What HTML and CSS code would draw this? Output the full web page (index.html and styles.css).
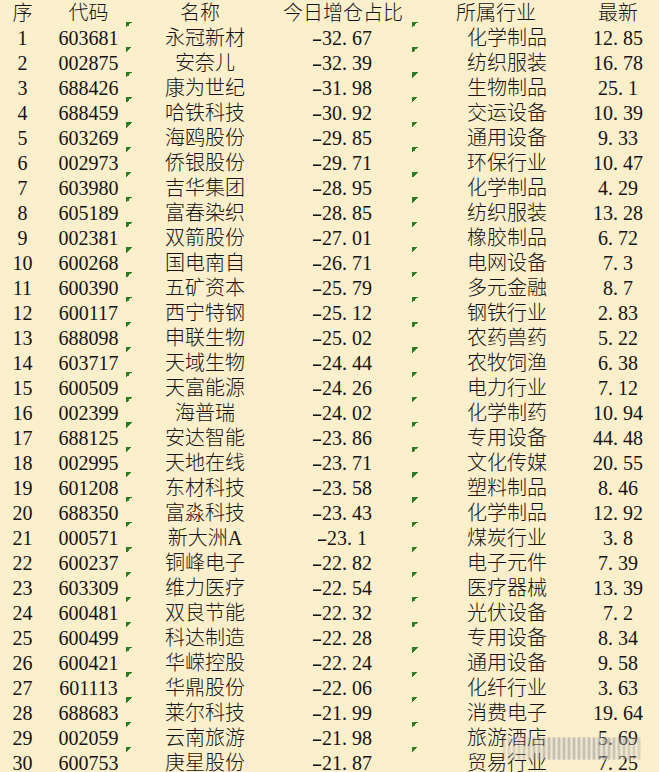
FILE: index.html
```html
<!DOCTYPE html>
<html lang="zh-CN">
<head>
<meta charset="utf-8">
<title>今日增仓占比</title>
<link rel="stylesheet" href="styles.css">
</head>
<body>
<div class="sheet">
  <div class="row head">
    <div class="c c0">序</div>
    <div class="c c1">代码</div>
    <div class="c c2">名称</div>
    <div class="c c3">今日增仓占比</div>
    <div class="c c4">所属行业</div>
    <div class="c c5">最新</div>
  </div>
  <div class="row"><div class="c c0">1</div><div class="c c1">603681</div><div class="c c2 t">永冠新材</div><div class="c c3"><span class="m">-</span>32<span class="d">.</span>67</div><div class="c c4 t">化学制品</div><div class="c c5">12<span class="d">.</span>85</div></div>
  <div class="row"><div class="c c0">2</div><div class="c c1">002875</div><div class="c c2 t">安奈儿</div><div class="c c3"><span class="m">-</span>32<span class="d">.</span>39</div><div class="c c4 t">纺织服装</div><div class="c c5">16<span class="d">.</span>78</div></div>
  <div class="row"><div class="c c0">3</div><div class="c c1">688426</div><div class="c c2 t">康为世纪</div><div class="c c3"><span class="m">-</span>31<span class="d">.</span>98</div><div class="c c4 t">生物制品</div><div class="c c5">25<span class="d">.</span>1</div></div>
  <div class="row"><div class="c c0">4</div><div class="c c1">688459</div><div class="c c2 t">哈铁科技</div><div class="c c3"><span class="m">-</span>30<span class="d">.</span>92</div><div class="c c4 t">交运设备</div><div class="c c5">10<span class="d">.</span>39</div></div>
  <div class="row"><div class="c c0">5</div><div class="c c1">603269</div><div class="c c2 t">海鸥股份</div><div class="c c3"><span class="m">-</span>29<span class="d">.</span>85</div><div class="c c4 t">通用设备</div><div class="c c5">9<span class="d">.</span>33</div></div>
  <div class="row"><div class="c c0">6</div><div class="c c1">002973</div><div class="c c2 t">侨银股份</div><div class="c c3"><span class="m">-</span>29<span class="d">.</span>71</div><div class="c c4 t">环保行业</div><div class="c c5">10<span class="d">.</span>47</div></div>
  <div class="row"><div class="c c0">7</div><div class="c c1">603980</div><div class="c c2 t">吉华集团</div><div class="c c3"><span class="m">-</span>28<span class="d">.</span>95</div><div class="c c4 t">化学制品</div><div class="c c5">4<span class="d">.</span>29</div></div>
  <div class="row"><div class="c c0">8</div><div class="c c1">605189</div><div class="c c2 t">富春染织</div><div class="c c3"><span class="m">-</span>28<span class="d">.</span>85</div><div class="c c4 t">纺织服装</div><div class="c c5">13<span class="d">.</span>28</div></div>
  <div class="row"><div class="c c0">9</div><div class="c c1">002381</div><div class="c c2 t">双箭股份</div><div class="c c3"><span class="m">-</span>27<span class="d">.</span>01</div><div class="c c4 t">橡胶制品</div><div class="c c5">6<span class="d">.</span>72</div></div>
  <div class="row"><div class="c c0">10</div><div class="c c1">600268</div><div class="c c2 t">国电南自</div><div class="c c3"><span class="m">-</span>26<span class="d">.</span>71</div><div class="c c4 t">电网设备</div><div class="c c5">7<span class="d">.</span>3</div></div>
  <div class="row"><div class="c c0">11</div><div class="c c1">600390</div><div class="c c2 t">五矿资本</div><div class="c c3"><span class="m">-</span>25<span class="d">.</span>79</div><div class="c c4 t">多元金融</div><div class="c c5">8<span class="d">.</span>7</div></div>
  <div class="row"><div class="c c0">12</div><div class="c c1">600117</div><div class="c c2 t">西宁特钢</div><div class="c c3"><span class="m">-</span>25<span class="d">.</span>12</div><div class="c c4 t">钢铁行业</div><div class="c c5">2<span class="d">.</span>83</div></div>
  <div class="row"><div class="c c0">13</div><div class="c c1">688098</div><div class="c c2 t">申联生物</div><div class="c c3"><span class="m">-</span>25<span class="d">.</span>02</div><div class="c c4 t">农药兽药</div><div class="c c5">5<span class="d">.</span>22</div></div>
  <div class="row"><div class="c c0">14</div><div class="c c1">603717</div><div class="c c2 t">天域生物</div><div class="c c3"><span class="m">-</span>24<span class="d">.</span>44</div><div class="c c4 t">农牧饲渔</div><div class="c c5">6<span class="d">.</span>38</div></div>
  <div class="row"><div class="c c0">15</div><div class="c c1">600509</div><div class="c c2 t">天富能源</div><div class="c c3"><span class="m">-</span>24<span class="d">.</span>26</div><div class="c c4 t">电力行业</div><div class="c c5">7<span class="d">.</span>12</div></div>
  <div class="row"><div class="c c0">16</div><div class="c c1">002399</div><div class="c c2 t">海普瑞</div><div class="c c3"><span class="m">-</span>24<span class="d">.</span>02</div><div class="c c4 t">化学制药</div><div class="c c5">10<span class="d">.</span>94</div></div>
  <div class="row"><div class="c c0">17</div><div class="c c1">688125</div><div class="c c2 t">安达智能</div><div class="c c3"><span class="m">-</span>23<span class="d">.</span>86</div><div class="c c4 t">专用设备</div><div class="c c5">44<span class="d">.</span>48</div></div>
  <div class="row"><div class="c c0">18</div><div class="c c1">002995</div><div class="c c2 t">天地在线</div><div class="c c3"><span class="m">-</span>23<span class="d">.</span>71</div><div class="c c4 t">文化传媒</div><div class="c c5">20<span class="d">.</span>55</div></div>
  <div class="row"><div class="c c0">19</div><div class="c c1">601208</div><div class="c c2 t">东材科技</div><div class="c c3"><span class="m">-</span>23<span class="d">.</span>58</div><div class="c c4 t">塑料制品</div><div class="c c5">8<span class="d">.</span>46</div></div>
  <div class="row"><div class="c c0">20</div><div class="c c1">688350</div><div class="c c2 t">富淼科技</div><div class="c c3"><span class="m">-</span>23<span class="d">.</span>43</div><div class="c c4 t">化学制品</div><div class="c c5">12<span class="d">.</span>92</div></div>
  <div class="row"><div class="c c0">21</div><div class="c c1">000571</div><div class="c c2 t">新大洲A</div><div class="c c3"><span class="m">-</span>23<span class="d">.</span>1</div><div class="c c4 t">煤炭行业</div><div class="c c5">3<span class="d">.</span>8</div></div>
  <div class="row"><div class="c c0">22</div><div class="c c1">600237</div><div class="c c2 t">铜峰电子</div><div class="c c3"><span class="m">-</span>22<span class="d">.</span>82</div><div class="c c4 t">电子元件</div><div class="c c5">7<span class="d">.</span>39</div></div>
  <div class="row"><div class="c c0">23</div><div class="c c1">603309</div><div class="c c2 t">维力医疗</div><div class="c c3"><span class="m">-</span>22<span class="d">.</span>54</div><div class="c c4 t">医疗器械</div><div class="c c5">13<span class="d">.</span>39</div></div>
  <div class="row"><div class="c c0">24</div><div class="c c1">600481</div><div class="c c2 t">双良节能</div><div class="c c3"><span class="m">-</span>22<span class="d">.</span>32</div><div class="c c4 t">光伏设备</div><div class="c c5">7<span class="d">.</span>2</div></div>
  <div class="row"><div class="c c0">25</div><div class="c c1">600499</div><div class="c c2 t">科达制造</div><div class="c c3"><span class="m">-</span>22<span class="d">.</span>28</div><div class="c c4 t">专用设备</div><div class="c c5">8<span class="d">.</span>34</div></div>
  <div class="row"><div class="c c0">26</div><div class="c c1">600421</div><div class="c c2 t">华嵘控股</div><div class="c c3"><span class="m">-</span>22<span class="d">.</span>24</div><div class="c c4 t">通用设备</div><div class="c c5">9<span class="d">.</span>58</div></div>
  <div class="row"><div class="c c0">27</div><div class="c c1">601113</div><div class="c c2 t">华鼎股份</div><div class="c c3"><span class="m">-</span>22<span class="d">.</span>06</div><div class="c c4 t">化纤行业</div><div class="c c5">3<span class="d">.</span>63</div></div>
  <div class="row"><div class="c c0">28</div><div class="c c1">688683</div><div class="c c2 t">莱尔科技</div><div class="c c3"><span class="m">-</span>21<span class="d">.</span>99</div><div class="c c4 t">消费电子</div><div class="c c5">19<span class="d">.</span>64</div></div>
  <div class="row"><div class="c c0">29</div><div class="c c1">002059</div><div class="c c2 t">云南旅游</div><div class="c c3"><span class="m">-</span>21<span class="d">.</span>98</div><div class="c c4 t">旅游酒店</div><div class="c c5">5<span class="d">.</span>69</div></div>
  <div class="row"><div class="c c0">30</div><div class="c c1">600753</div><div class="c c2 t">庚星股份</div><div class="c c3"><span class="m">-</span>21<span class="d">.</span>87</div><div class="c c4 t">贸易行业</div><div class="c c5">7<span class="d">.</span>25</div></div>
  <div class="wm" aria-hidden="true"></div>
</div>
</body>
</html>
```
FILE: styles.css
```css
html, body {
  margin: 0;
  padding: 0;
  background: #fcefcc;
}
body {
  width: 659px;
  height: 772px;
  overflow: hidden;
  font-family: "Liberation Serif", "Noto Sans CJK SC", serif;
  font-size: 20px;
  font-weight: 300;
  color: #141414;
}
.sheet {
  position: relative;
  width: 659px;
}
.row {
  display: grid;
  grid-template-columns: 45px 81px 158px 128px 172px 68px;
  height: 25px;
}
.row.head {
  height: 22px;
}
.c {
  display: flex;
  justify-content: center;
  align-items: baseline;
  height: 18px;
  line-height: 18px;
  padding-top: 7px;
  white-space: nowrap;
}
.head .c {
  height: 18px;
  padding-top: 4px;
}
.c1 { padding-left: 6px; }
.c3 { padding-right: 12px; }
.c4 { padding-left: 18px; }
.head .c2 { padding-right: 10px; }
.head .c3 { padding-right: 10px; }
.head .c4 { padding-right: 22px; }

.t {
  background: linear-gradient(135deg, #2a7d24 0 50%, transparent 50%) no-repeat 0 0 / 6px 6px;
}
.m {
  display: inline-block;
  width: 10px;
  text-align: center;
  transform: scaleX(1.6);
}
.d {
  display: inline-block;
  width: 10px;
  text-align: left;
}
.wm {
  position: absolute;
  left: 503px;
  top: 737px;
  width: 138px;
  height: 23px;
  background:
    repeating-linear-gradient(90deg, rgba(70, 70, 70, 0.6) 0 2px, rgba(255, 255, 255, 0.55) 2px 5px);
  -webkit-mask-image: linear-gradient(90deg, rgba(0,0,0,0.5), #000 35%, #000 75%, rgba(0,0,0,0.6));
  mask-image: linear-gradient(90deg, rgba(0,0,0,0.5), #000 35%, #000 75%, rgba(0,0,0,0.6));
  filter: blur(1.3px);
  opacity: 0.85;
}
```
